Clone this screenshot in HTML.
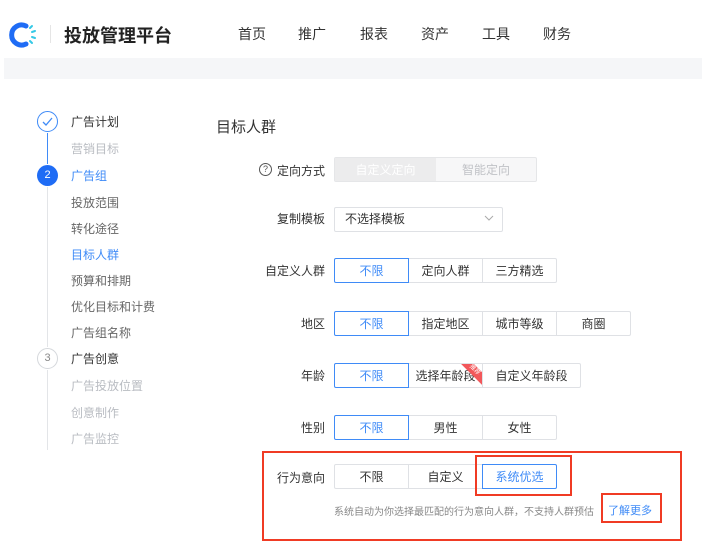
<!DOCTYPE html>
<html><head><meta charset="utf-8"><style>
*{margin:0;padding:0;box-sizing:border-box}
body{width:702px;height:559px;background:#fff;position:relative;overflow:hidden;font-family:"Liberation Sans","Noto Sans CJK SC",sans-serif;color:#333;font-size:12px}
.a{position:absolute;white-space:nowrap}
.nav{font-size:14px;color:#333;top:24px}
.sb{left:71px;font-size:12px;color:#333}
.sb.g{color:#b9bcc2}
.lbl{font-size:12px;color:#333;text-align:right;width:120px;left:205px}
.grp{position:absolute;display:flex;height:25px;left:334px}
.grp div{width:75px;height:25px;border:1px solid #dfe1e5;margin-left:-1px;display:flex;align-items:center;justify-content:center;font-size:12px;color:#333;background:#fff}
.grp div:first-child{margin-left:0;border-radius:2px 0 0 2px}
.grp div:last-child{border-radius:0 2px 2px 0}
.grp div.on{border-color:#3f8bf7;color:#3f8bf7;position:relative;z-index:2}
.rb{position:absolute;border:2px solid #f03b24}
</style></head><body>
<svg class="a" style="left:9px;top:21px" width="30" height="28" viewBox="0 0 30 28">
<path d="M17 5 A10 10 0 1 0 17 23" fill="none" stroke="#1f6cf5" stroke-width="5" stroke-linecap="round"/>
<g stroke="#35c9e6" stroke-width="2" stroke-linecap="round"><line x1="21" y1="7" x2="23" y2="5"/><line x1="23" y1="11" x2="26" y2="10"/><line x1="23" y1="16" x2="26" y2="17"/><line x1="21" y1="20" x2="23" y2="22"/></g></svg>
<div class="a" style="left:50px;top:25px;width:1px;height:18px;background:#e5e5e5"></div>
<div class="a" style="left:64px;top:22px;font-size:18px;font-weight:600;color:#222">投放管理平台</div>
<div class="a nav" style="left:238px">首页</div>
<div class="a nav" style="left:298px">推广</div>
<div class="a nav" style="left:360px">报表</div>
<div class="a nav" style="left:421px">资产</div>
<div class="a nav" style="left:482px">工具</div>
<div class="a nav" style="left:543px">财务</div>
<div class="a" style="left:4px;top:58px;width:698px;height:21px;background:#f5f6f8"></div>

<div class="a" style="left:37px;top:111px;width:21px;height:21px;border:1px solid #3f8bf7;border-radius:50%"></div>
<svg class="a" style="left:41px;top:116px" width="13" height="11"><path d="M2 6 L5 9 L11 2" fill="none" stroke="#3f8bf7" stroke-width="1.3"/></svg>
<div class="a" style="left:47px;top:133px;width:1px;height:31px;background:#3f8bf7"></div>
<div class="a" style="left:37px;top:165px;width:21px;height:21px;background:#1f6cf5;border-radius:50%;color:#fff;font-size:11px;text-align:center;line-height:21px">2</div>
<div class="a" style="left:47px;top:187px;width:1px;height:160px;background:#e3e5e8"></div>
<div class="a" style="left:37px;top:348px;width:21px;height:21px;border:1px solid #d5d8dc;border-radius:50%;color:#888;font-size:11px;text-align:center;line-height:19px">3</div>
<div class="a" style="left:47px;top:370px;width:1px;height:80px;background:#e3e5e8"></div>
<div class="a sb" style="top:113px">广告计划</div>
<div class="a sb g" style="top:140px">营销目标</div>
<div class="a sb" style="top:167px;color:#3f8bf7">广告组</div>
<div class="a sb" style="top:194px;color:#666">投放范围</div>
<div class="a sb" style="top:220px;color:#666">转化途径</div>
<div class="a sb" style="top:246px;color:#3f8bf7">目标人群</div>
<div class="a sb" style="top:272px;color:#666">预算和排期</div>
<div class="a sb" style="top:298px;color:#666">优化目标和计费</div>
<div class="a sb" style="top:324px;color:#666">广告组名称</div>
<div class="a sb" style="top:350px">广告创意</div>
<div class="a sb g" style="top:377px">广告投放位置</div>
<div class="a sb g" style="top:404px">创意制作</div>
<div class="a sb g" style="top:430px">广告监控</div>

<div class="a" style="left:216px;top:116px;font-size:15px;color:#333">目标人群</div>

<div class="a" style="left:259px;top:163px;width:13px;height:13px;border:1px solid #555;border-radius:50%;font-size:9px;text-align:center;line-height:11px;color:#555">?</div>
<div class="a lbl" style="top:162px">定向方式</div>
<div class="a" style="left:334px;top:157px;width:203px;height:25px;border:1px solid #e5e6e8;border-radius:2px;background:#f7f7f8;display:flex">
<div style="width:101px;background:#ececed;display:flex;align-items:center;justify-content:center;color:#fff">自定义定向</div>
<div style="flex:1;display:flex;align-items:center;justify-content:center;color:#c0c2c6">智能定向</div></div>

<div class="a lbl" style="top:210px">复制模板</div>
<div class="a" style="left:334px;top:207px;width:169px;height:25px;border:1px solid #dfe1e5;border-radius:2px;padding-left:10px;line-height:23px">不选择模板</div>
<svg class="a" style="left:484px;top:215px" width="10" height="7"><path d="M1 1 L5 5 L9 1" fill="none" stroke="#aaa"/></svg>

<div class="a lbl" style="top:262px">自定义人群</div>
<div class="grp" style="top:258px"><div class="on">不限</div><div>定向人群</div><div>三方精选</div></div>
<div class="a lbl" style="top:315px">地区</div>
<div class="grp" style="top:311px"><div class="on">不限</div><div>指定地区</div><div>城市等级</div><div>商圈</div></div>
<div class="a lbl" style="top:367px">年龄</div>
<div class="grp" style="top:363px"><div class="on">不限</div><div style="position:relative;overflow:hidden">选择年龄段<span style="position:absolute;right:-10px;top:2px;width:36px;height:9px;background:#f2575a;transform:rotate(45deg);font-size:6px;color:#fff;text-align:center;line-height:9px">推荐</span></div><div style="width:99px">自定义年龄段</div></div>
<div class="a lbl" style="top:419px">性别</div>
<div class="grp" style="top:415px"><div class="on">不限</div><div>男性</div><div>女性</div></div>

<div class="rb" style="left:262px;top:451px;width:420px;height:90px"></div>
<div class="a lbl" style="top:469px">行为意向</div>
<div class="grp" style="top:464px"><div>不限</div><div>自定义</div><div class="on">系统优选</div></div>
<div class="rb" style="left:475px;top:455px;width:97px;height:41px"></div>
<div class="a" style="left:334px;top:503px;font-size:10px;color:#888">系统自动为你选择最匹配的行为意向人群，不支持人群预估</div>
<div class="a" style="left:608px;top:502px;font-size:11px;color:#3f8bf7">了解更多</div>
<div class="rb" style="left:601px;top:493px;width:61px;height:30px"></div>
</body></html>
